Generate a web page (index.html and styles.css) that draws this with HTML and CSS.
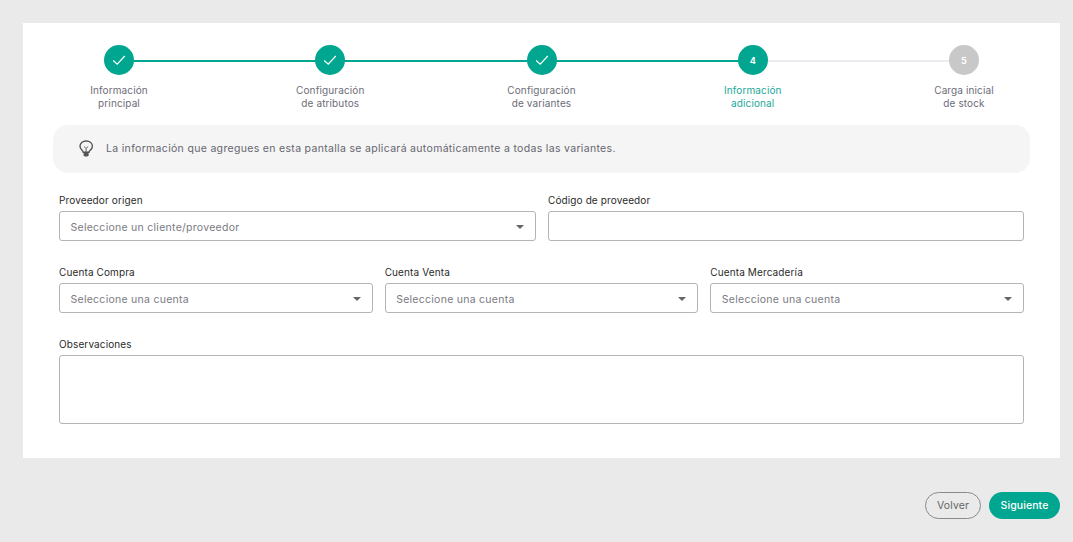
FILE: index.html

```html
<!DOCTYPE html>
<html lang="es">
<head>
    <meta charset="utf-8">
    <title>Información adicional</title>
    <link rel="stylesheet" href="styles.css">
</head>
<body>
    <div class="card">
        <div class="stepper">
            <div class="step done">
                <span class="circle"><svg viewBox="0 0 14 14" width="14" height="14"><path d="M1.2 7.5 L5.2 11.2 L12.8 3" fill="none" stroke="#fff" stroke-width="1.2"/></svg></span>
                <span class="step-label">Información<br>principal</span>
            </div>
            <div class="step done">
                <span class="circle"><svg viewBox="0 0 14 14" width="14" height="14"><path d="M1.2 7.5 L5.2 11.2 L12.8 3" fill="none" stroke="#fff" stroke-width="1.2"/></svg></span>
                <span class="step-label">Configuración<br>de atributos</span>
            </div>
            <div class="step done">
                <span class="circle"><svg viewBox="0 0 14 14" width="14" height="14"><path d="M1.2 7.5 L5.2 11.2 L12.8 3" fill="none" stroke="#fff" stroke-width="1.2"/></svg></span>
                <span class="step-label">Configuración<br>de variantes</span>
            </div>
            <div class="step active">
                <span class="circle">4</span>
                <span class="step-label">Información<br>adicional</span>
            </div>
            <div class="step pending">
                <span class="circle">5</span>
                <span class="step-label">Carga inicial<br>de stock</span>
            </div>
        </div>

        <div class="notice">
            <svg class="bulb" viewBox="0 0 16 18" width="16" height="18">
                <path d="M5.2 12.2 C5.2 10.6 2 9.6 2 6.3 C2 3.2 4.6 1 8.2 1 C11.8 1 14.4 3.2 14.4 6.3 C14.4 9.6 11 10.6 11 12.2 Z" fill="none" stroke="#555" stroke-width="1.4"/>
                <path d="M6 6.5 L8.1 8.5 L10.2 6.5 M8.1 8.5 V12" fill="none" stroke="#555" stroke-width="0.9"/>
                <path d="M5.6 13 H10.6 V15.2 L9.4 16.6 H6.8 L5.6 15.2 Z" fill="#555"/>
            </svg>
            <p>La información que agregues en esta pantalla se aplicará automáticamente a todas las variantes.</p>
        </div>

        <div class="row row-two">
            <div class="field">
                <label>Proveedor origen</label>
                <div class="select"><span>Seleccione un cliente/proveedor</span><i class="caret"></i></div>
            </div>
            <div class="field">
                <label for="codigo">Código de proveedor</label>
                <input type="text" id="codigo">
            </div>
        </div>

        <div class="row row-three">
            <div class="field">
                <label>Cuenta Compra</label>
                <div class="select"><span>Seleccione una cuenta</span><i class="caret"></i></div>
            </div>
            <div class="field">
                <label>Cuenta Venta</label>
                <div class="select"><span>Seleccione una cuenta</span><i class="caret"></i></div>
            </div>
            <div class="field">
                <label>Cuenta Mercadería</label>
                <div class="select"><span>Seleccione una cuenta</span><i class="caret"></i></div>
            </div>
        </div>

        <div class="field">
            <label for="observaciones">Observaciones</label>
            <textarea id="observaciones"></textarea>
        </div>
    </div>

    <div class="actions">
        <button type="button" class="btn-back">Volver</button>
        <button type="button" class="btn-next">Siguiente</button>
    </div>
</body>
</html>
```

FILE: styles.css

```css
* {
    box-sizing: border-box;
}
body {
    margin: 0;
    height: 542px;
    overflow: hidden;
    padding: 23px 13px 0 23px;
    background: #eaeaea;
    font-family: Inter, "Liberation Sans", sans-serif;
    font-size: 10px;
    letter-spacing: 0.12px;
    color: #333;
}
.card {
    background: #fff;
    height: 435px;
    padding: 22px 36px 0;
}
.stepper {
    display: flex;
    justify-content: space-between;
}
.step {
    position: relative;
    width: 120px;
    display: flex;
    flex-direction: column;
    align-items: center;
}
/* line runs from this circle to the next one */
.step:not(:last-child)::after {
    content: "";
    position: absolute;
    top: 15px;
    left: 60px;
    width: 211.25px;
    height: 2px;
    background: #00a68f;
}
.step.active::after {
    background: #ecebf0;
}
.circle {
    position: relative;
    z-index: 1;
    width: 30px;
    height: 30px;
    border-radius: 50%;
    background: #00a68f;
    color: #fff;
    font-size: 9px;
    font-weight: 700;
    display: flex;
    justify-content: center;
    align-items: center;
}
.pending .circle {
    background: #c8c8c8;
}
.step-label {
    margin-top: 9px;
    line-height: 13px;
    text-align: center;
    color: #6d6d78;
}
.active .step-label {
    color: #1aa898;
}
.notice {
    margin: 15px -6px 0;
    height: 48px;
    padding-left: 25px;
    border-radius: 15px;
    background: #f5f5f5;
    display: flex;
    align-items: center;
    gap: 12px;
}
.notice p {
    margin: -2px 0 0;
    font-size: 10.5px;
    letter-spacing: 0.32px;
    color: #666670;
}
.bulb {
    flex: none;
}
.row {
    display: grid;
    gap: 12px;
    margin-top: 21px;
}
.row-two {
    grid-template-columns: 477px 476px;
}
.row-three {
    grid-template-columns: repeat(3, 1fr);
    margin-top: 25px;
}
.row-three + .field {
    margin-top: 25px;
}
.field label {
    display: block;
    height: 13px;
    line-height: 13px;
    margin-bottom: 4px;
    color: #2b2b2b;
}
.select, .field input, .field textarea {
    display: block;
    width: 100%;
    height: 30px;
    border: 1px solid #b4b4b4;
    border-radius: 3px;
    background: #fff;
    margin: 0;
    outline: none;
}
.select {
    display: flex;
    align-items: center;
    justify-content: space-between;
    padding: 2px 11px 0 10.5px;
    font-size: 10.5px;
    letter-spacing: 0.27px;
    color: #7a7a82;
}
.field textarea {
    height: 69px;
    resize: none;
}
.caret {
    width: 0;
    height: 0;
    border-left: 4.5px solid transparent;
    border-right: 4.5px solid transparent;
    border-top: 4.5px solid #666;
}
.actions {
    display: flex;
    justify-content: flex-end;
    gap: 8px;
    margin-top: 34px;
}
.actions button {
    height: 27px;
    border-radius: 14px;
    font-family: inherit;
    font-size: 10.5px;
    letter-spacing: 0.1px;
}
.btn-back {
    width: 56px;
    background: transparent;
    border: 1px solid #8a8a8a;
    color: #666;
}
.btn-next {
    width: 71px;
    background: #00a68f;
    border: none;
    color: #fff;
    font-weight: 500;
}
```
